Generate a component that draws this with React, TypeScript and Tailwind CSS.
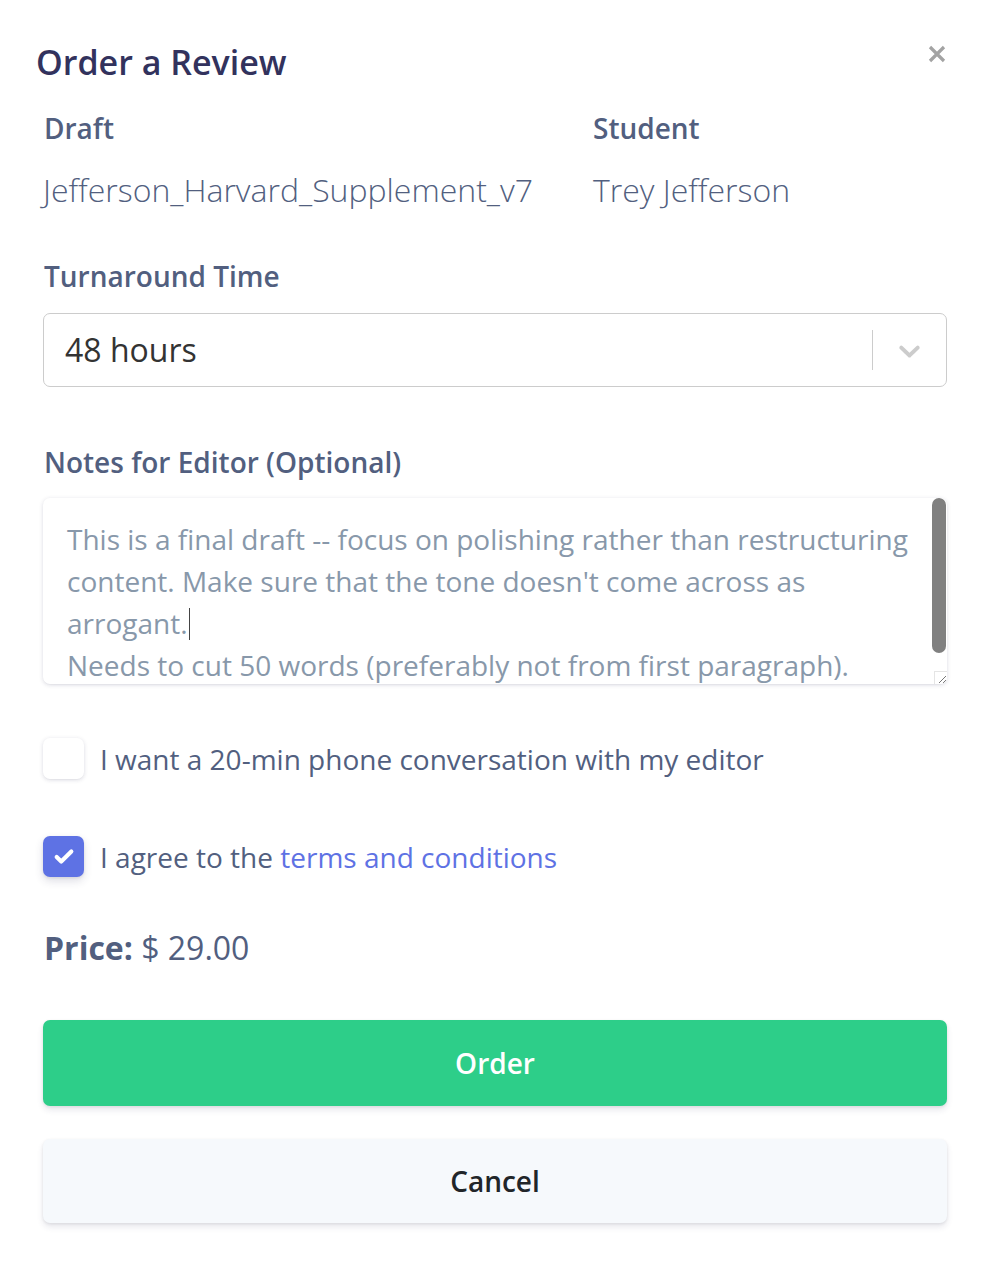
import { Check } from "lucide-react";

function Checkbox({ checked }: { checked?: boolean }) {
  return (
    <div
      className={
        "flex h-[41px] w-[41px] shrink-0 items-center justify-center rounded-[7px] " +
        (checked
          ? "bg-[#5e72e4] shadow-[0_4px_8px_rgba(50,50,93,0.16),0_1px_3px_rgba(0,0,0,0.08)]"
          : "bg-white shadow-[0_1px_4px_rgba(50,50,93,0.18),0_1px_0_rgba(0,0,0,0.02)]")
      }
    >
      {checked && <Check className="h-[22px] w-[22px] text-white" strokeWidth={4.5} />}
    </div>
  );
}

export default function App() {
  return (
    <main className="relative h-[1263px] w-[992px] bg-white font-['Open_Sans',sans-serif]">
      <header className="flex items-start justify-between pl-[36px] pr-[46px] pt-[42px]">
        <h1 className="text-[34px] font-semibold leading-[40px] text-[#32325d]">Order a Review</h1>
        <button className="mt-[3px] text-[#a3a3a3]">
          <svg width="18" height="18" viewBox="0 0 18 18">
            <path d="M2 2 L16 16 M16 2 L2 16" stroke="currentColor" strokeWidth="3.2" />
          </svg>
        </button>
      </header>

      <section className="flex flex-col px-[45px] pl-[43px]">
        <div className="mt-[28px] flex">
          <div className="w-[550px]">
            <p className="pl-[1px] text-[28px] font-semibold leading-[36px] text-[#525f7f]">Draft</p>
            <p className="mt-[24px] text-[32px] font-light leading-[40px] text-[#525f7f]">
              Jefferson_Harvard_Supplement_v7
            </p>
          </div>
          <div>
            <p className="text-[28px] font-semibold leading-[36px] text-[#525f7f]">Student</p>
            <p className="mt-[24px] text-[32px] font-light leading-[40px] text-[#525f7f]">Trey Jefferson</p>
          </div>
        </div>

        <p className="mt-[48px] pl-[1px] text-[28px] font-semibold leading-[36px] text-[#525f7f]">Turnaround Time</p>
        <div className="mt-[19px] flex h-[74px] items-center rounded-[7px] border border-[#cccccc] bg-white">
          <span className="flex-1 pl-[21px] text-[32px] leading-[40px] text-[#333333]">48 hours</span>
          <span className="h-[40px] w-px bg-[#cccccc]" />
          <span className="flex w-[73px] items-center justify-center text-[#cccccc]">
            <svg width="35" height="35" viewBox="0 0 20 20" fill="currentColor">
              <path d="M4.516 7.548c0.436-0.446 1.043-0.481 1.576 0l3.908 3.747 3.908-3.747c0.533-0.481 1.141-0.446 1.574 0 0.436 0.445 0.408 1.197 0 1.615-0.406 0.418-4.695 4.502-4.695 4.502-0.217 0.223-0.502 0.335-0.787 0.335s-0.57-0.112-0.789-0.335c0 0-4.287-4.084-4.695-4.502s-0.436-1.17 0-1.615z" />
            </svg>
          </span>
        </div>

        <p className="mt-[57px] pl-[1px] text-[28px] font-semibold leading-[36px] text-[#525f7f]">
          Notes for Editor (Optional)
        </p>
        <div className="relative mt-[18px] h-[186px] overflow-hidden rounded-[7px] bg-white shadow-[0_1px_4px_rgba(50,50,93,0.18),0_1px_0_rgba(0,0,0,0.02)]">
          <div className="pl-[24px] pr-[30px] pt-[20px] text-[28px] leading-[42px] text-[#8898aa]">
            <p>
              This is a final draft -- focus on polishing rather than restructuring content. Make sure that the tone
              doesn't come across as arrogant.<span className="ml-[1px] inline-block h-[32px] w-px translate-y-[6px] bg-[#444]" />
            </p>
            <p>Needs to cut 50 words (preferably not from first paragraph).</p>
          </div>
          <div className="absolute right-[1px] top-0 h-[155px] w-[14px] rounded-full bg-[#808080]" />
          <div className="absolute bottom-0 right-0 flex h-[13px] w-[13px] items-end justify-end border-l border-t border-[#e5e5e5] bg-white">
            <svg width="11" height="11" viewBox="0 0 11 11">
              <path d="M3 10 L10 3 M7 10 L10 7" stroke="#777" strokeWidth="1" />
            </svg>
          </div>
        </div>

        <label className="mt-[54px] flex items-center gap-[16px] text-[28px] leading-[40px] text-[#525f7f]">
          <Checkbox />
          <span>I want a 20-min phone conversation with my editor</span>
        </label>
        <label className="mt-[57px] flex items-center gap-[16px] text-[28px] leading-[40px] text-[#525f7f]">
          <Checkbox checked />
          <span>
            I agree to the <a className="text-[#5e72e4]">terms and conditions</a>
          </span>
        </label>

        <p className="mt-[51px] pl-[1px] text-[32px] leading-[40px] text-[#525f7f]">
          <span className="font-bold">Price:</span> $ 29.00
        </p>

        <button className="mt-[52px] h-[86px] rounded-[7px] bg-[#2dce89] text-[28px] font-semibold text-white shadow-[0_4px_6px_rgba(50,50,93,0.11),0_1px_3px_rgba(0,0,0,0.08)]">
          Order
        </button>
        <button className="mt-[33px] h-[84px] rounded-[7px] bg-[#f6f9fc] text-[28px] font-semibold text-[#212529] shadow-[0_4px_6px_rgba(50,50,93,0.11),0_1px_3px_rgba(0,0,0,0.08)]">
          Cancel
        </button>
      </section>
    </main>
  );
}
